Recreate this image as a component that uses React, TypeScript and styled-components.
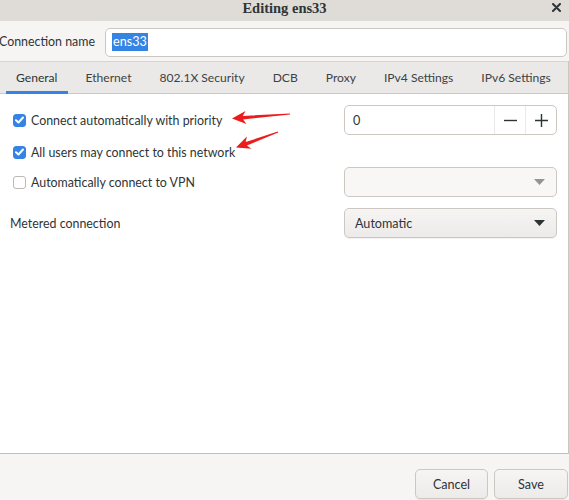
import React from "react";
import styled, { createGlobalStyle } from "styled-components";

const GlobalStyle = createGlobalStyle`
  html, body {
    margin: 0;
    padding: 0;
    background: #f6f5f4;
  }
  body {
    font-family: Lato, "Noto Sans", sans-serif;
    font-size: 12.6px;
    color: #2e3436;
  }
`;

const Window = styled.div`
  position: relative;
  width: 569px;
  height: 500px;
  display: flex;
  flex-direction: column;
  overflow: hidden;
  background: #f6f5f4;
`;

const TitleBar = styled.div`
  height: 21px;
  flex: none;
  display: flex;
  align-items: flex-start;
  justify-content: center;
  background: #dfdcd8;
  position: relative;
`;

const Title = styled.div`
  font-family: "Liberation Serif", "DejaVu Serif", serif;
  font-weight: bold;
  font-size: 14.5px;
  line-height: 17px;
  color: #2e3436;
`;

const CloseBtn = styled.div`
  position: absolute;
  right: 8px;
  top: 3px;
  width: 9px;
  height: 9px;
  display: flex;
`;

const NameRow = styled.div`
  height: 40px;
  flex: none;
  display: flex;
  align-items: center;
  gap: 10px;
  margin-left: -1px;
  padding-right: 2px;
`;

const NameLabel = styled.label`
  font-size: 12.4px;
  white-space: nowrap;
`;

const NameInput = styled.div`
  flex: 1;
  height: 29px;
  box-sizing: border-box;
  margin-top: 2px;
  background: #ffffff;
  border: 1px solid #cdc7c2;
  border-radius: 5px;
  display: flex;
  align-items: center;
  padding-left: 6px;
`;

const Selected = styled.span`
  background: #3584e4;
  color: #ffffff;
  font-size: 12.6px;
  line-height: 18px;
  padding: 0 1px;
`;

const Notebook = styled.div`
  flex: 1;
  display: flex;
  flex-direction: column;
  border-right: 1px solid #cdc7c2;
  border-bottom: 1px solid #c3bfbb;
`;

const TabBar = styled.div`
  height: 31px;
  flex: none;
  display: flex;
  padding-left: 2px;
  background: #ebe9e7;
  border-top: 1px solid #d8d4d0;
  border-bottom: 1px solid #cdc7c2;
`;

const Tab = styled.div<{ $active?: boolean }>`
  position: relative;
  padding: 0 14px;
  display: flex;
  align-items: center;
  font-size: 12.1px;
  white-space: nowrap;
  color: ${(p) => (p.$active ? "#2e3436" : "#3d4244")};
  &::after {
    content: "";
    position: absolute;
    left: 4px;
    right: 3px;
    bottom: -1px;
    height: 3px;
    background: ${(p) => (p.$active ? "#3584e4" : "transparent")};
  }
`;

const Page = styled.div`
  position: relative;
  flex: 1;
  background: #ffffff;
  padding: 11px 11px 0 10px;
  display: flex;
  flex-direction: column;
`;

const Row = styled.div<{ $top?: number }>`
  height: 30px;
  margin-top: ${(p) => p.$top ?? 0}px;
  display: flex;
  align-items: center;
  justify-content: space-between;
`;

const CheckLabel = styled.label`
  display: flex;
  align-items: center;
  gap: 5px;
  padding-left: 3px;
  font-size: 12.4px;
`;

const Box = styled.span<{ $checked?: boolean }>`
  width: 13px;
  height: 13px;
  box-sizing: border-box;
  border-radius: 3px;
  display: flex;
  align-items: center;
  justify-content: center;
  background: ${(p) => (p.$checked ? "#3584e4" : "#ffffff")};
  border: 1px solid ${(p) => (p.$checked ? "#3584e4" : "#bdb8b3")};
`;

const PlainLabel = styled.span`
  font-size: 12.4px;
`;

const Widget = styled.div<{ $disabled?: boolean; $button?: boolean }>`
  width: 213px;
  height: 30px;
  box-sizing: border-box;
  border: 1px solid #cdc7c2;
  border-radius: 5px;
  display: flex;
  align-items: center;
  background: ${(p) =>
    p.$disabled ? "#f8f7f6" : p.$button ? "linear-gradient(#f6f5f4, #edebe9)" : "#ffffff"};
  box-shadow: ${(p) => (p.$button ? "0 1px 0 rgba(0,0,0,0.05)" : "none")};
`;

const SpinValue = styled.div`
  flex: 1;
  padding-left: 8px;
`;

const SpinButton = styled.div`
  width: 30px;
  height: 100%;
  border-left: 1px solid #ebe9e7;
  display: flex;
  align-items: center;
  justify-content: center;
`;

const ComboText = styled.div`
  flex: 1;
  padding-left: 10px;
`;

const ComboArrow = styled.div`
  width: 30px;
  display: flex;
  justify-content: center;
  padding-right: 2px;
`;

const Footer = styled.div`
  height: 46px;
  flex: none;
  display: flex;
  justify-content: flex-end;
  align-items: flex-start;
  gap: 6px;
  padding: 15px 1px 0 0;
  box-sizing: border-box;
`;

const Button = styled.button<{ $w?: number }>`
  width: ${(p) => p.$w ?? 74}px;
  height: 30px;
  border: 1px solid #cdc7c2;
  border-radius: 5px;
  background: linear-gradient(#f6f5f4, #edebe9);
  box-shadow: 0 1px 0 rgba(0, 0, 0, 0.06);
  font-family: Lato, "Noto Sans", sans-serif;
  font-size: 12.6px;
  color: #2e3436;
  padding: 0;
`;

const ArrowLayer = styled.svg`
  position: absolute;
  left: 0;
  top: 0;
  pointer-events: none;
`;

function arrowPoints(x1: number, y1: number, x2: number, y2: number) {
  const len = Math.hypot(x2 - x1, y2 - y1);
  const ux = (x2 - x1) / len;
  const uy = (y2 - y1) / len;
  const px = -uy;
  const py = ux;
  const bx = x2 - ux * 14;
  const by = y2 - uy * 14;
  const nx = x2 - ux * 11;
  const ny = y2 - uy * 11;
  const pts = [
    [x1 + px * 0.5, y1 + py * 0.5],
    [nx + px * 1.8, ny + py * 1.8],
    [bx + px * 6.5, by + py * 6.5],
    [x2, y2],
    [bx - px * 6.5, by - py * 6.5],
    [nx - px * 1.8, ny - py * 1.8],
    [x1 - px * 0.5, y1 - py * 0.5],
  ];
  return pts.map((p) => p.map((v) => v.toFixed(1)).join(",")).join(" ");
}

const Check = () => (
  <svg width="9" height="8" viewBox="0 0 9 8">
    <path d="M1 4.2 L3.5 6.5 L8 1.5" fill="none" stroke="#fff" strokeWidth="2" strokeLinecap="round" strokeLinejoin="round" />
  </svg>
);

const Triangle = ({ color }: { color: string }) => (
  <svg width="11" height="6" viewBox="0 0 11 6">
    <path d="M0 0 H11 L5.5 6 Z" fill={color} />
  </svg>
);

const tabs = ["General", "Ethernet", "802.1X Security", "DCB", "Proxy", "IPv4 Settings", "IPv6 Settings"];

export default function App() {
  return (
    <Window>
      <GlobalStyle />
      <TitleBar>
        <Title>Editing ens33</Title>
        <CloseBtn>
          <svg width="9" height="9" viewBox="0 0 9 9">
            <path d="M1 1 L8 8 M8 1 L1 8" stroke="#2e3436" strokeWidth="2" strokeLinecap="round" />
          </svg>
        </CloseBtn>
      </TitleBar>
      <NameRow>
        <NameLabel>Connection name</NameLabel>
        <NameInput>
          <Selected>ens33</Selected>
        </NameInput>
      </NameRow>
      <Notebook>
        <TabBar>
          {tabs.map((t, i) => (
            <Tab key={t} $active={i === 0}>
              {t}
            </Tab>
          ))}
        </TabBar>
        <Page>
          <Row>
            <CheckLabel>
              <Box $checked>
                <Check />
              </Box>
              Connect automatically with priority
            </CheckLabel>
            <Widget>
              <SpinValue>0</SpinValue>
              <SpinButton>
                <svg width="13" height="13" viewBox="0 0 13 13">
                  <path d="M0 6.5 H13" stroke="#2e3436" strokeWidth="1.4" />
                </svg>
              </SpinButton>
              <SpinButton>
                <svg width="13" height="13" viewBox="0 0 13 13">
                  <path d="M0 6.5 H13 M6.5 0 V13" stroke="#2e3436" strokeWidth="1.4" />
                </svg>
              </SpinButton>
            </Widget>
          </Row>
          <Row $top={2}>
            <CheckLabel>
              <Box $checked>
                <Check />
              </Box>
              All users may connect to this network
            </CheckLabel>
          </Row>
          <Row>
            <CheckLabel>
              <Box />
              Automatically connect to VPN
            </CheckLabel>
            <Widget $disabled>
              <ComboText />
              <ComboArrow>
                <Triangle color="#929595" />
              </ComboArrow>
            </Widget>
          </Row>
          <Row $top={11}>
            <PlainLabel>Metered connection</PlainLabel>
            <Widget $button>
              <ComboText>Automatic</ComboText>
              <ComboArrow>
                <Triangle color="#2e3436" />
              </ComboArrow>
            </Widget>
          </Row>
        </Page>
      </Notebook>
      <Footer>
        <Button $w={73}>Cancel</Button>
        <Button>Save</Button>
      </Footer>
      <ArrowLayer width="569" height="500">
        <polygon points={arrowPoints(290, 114, 232, 118.5)} fill="#ec1c1c" />
        <polygon points={arrowPoints(278, 132, 236, 147.5)} fill="#ec1c1c" />
      </ArrowLayer>
    </Window>
  );
}
